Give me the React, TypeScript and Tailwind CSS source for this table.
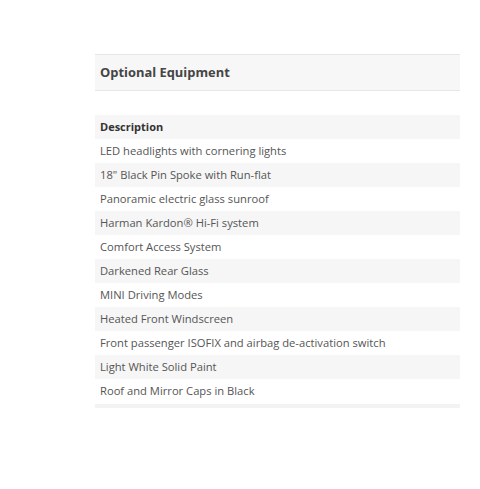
import React from "react";

const items = [
  "LED headlights with cornering lights",
  "18\" Black Pin Spoke with Run-flat",
  "Panoramic electric glass sunroof",
  "Harman Kardon® Hi-Fi system",
  "Comfort Access System",
  "Darkened Rear Glass",
  "MINI Driving Modes",
  "Heated Front Windscreen",
  "Front passenger ISOFIX and airbag de-activation switch",
  "Light White Solid Paint",
  "Roof and Mirror Caps in Black",
];

export default function App() {
  return (
    <div
      className="w-[480px] h-[489px] bg-white"
      style={{ fontFamily: '"Open Sans", "Liberation Sans", sans-serif' }}
    >
      <div className="pt-[54px] pl-[95px] w-[460px]">
        <div className="h-[37px] border-y border-[#e6e6e6] bg-[#f7f7f7] flex items-center pl-[5px] pt-[1px]">
          <span className="text-[12.9px] font-bold text-[#454545]">
            Optional Equipment
          </span>
        </div>
        <div className="mt-[24px]">
          <div className="h-[24px] bg-[#f6f6f6] flex items-center pl-[5px] pt-[1px]">
            <span className="text-[11px] font-bold text-[#333]">Description</span>
          </div>
          {items.map((t, i) => (
            <div
              key={i}
              className={
                "h-[24px] flex items-center pl-[5px] pt-[1px] " +
                (i % 2 === 1 ? "bg-[#f6f6f6]" : "bg-white")
              }
            >
              <span className="text-[11.2px] text-[#555]">{t}</span>
            </div>
          ))}
          <div className="h-[4px] bg-[#f3f3f3] mt-[1px]" />
        </div>
      </div>
    </div>
  );
}
